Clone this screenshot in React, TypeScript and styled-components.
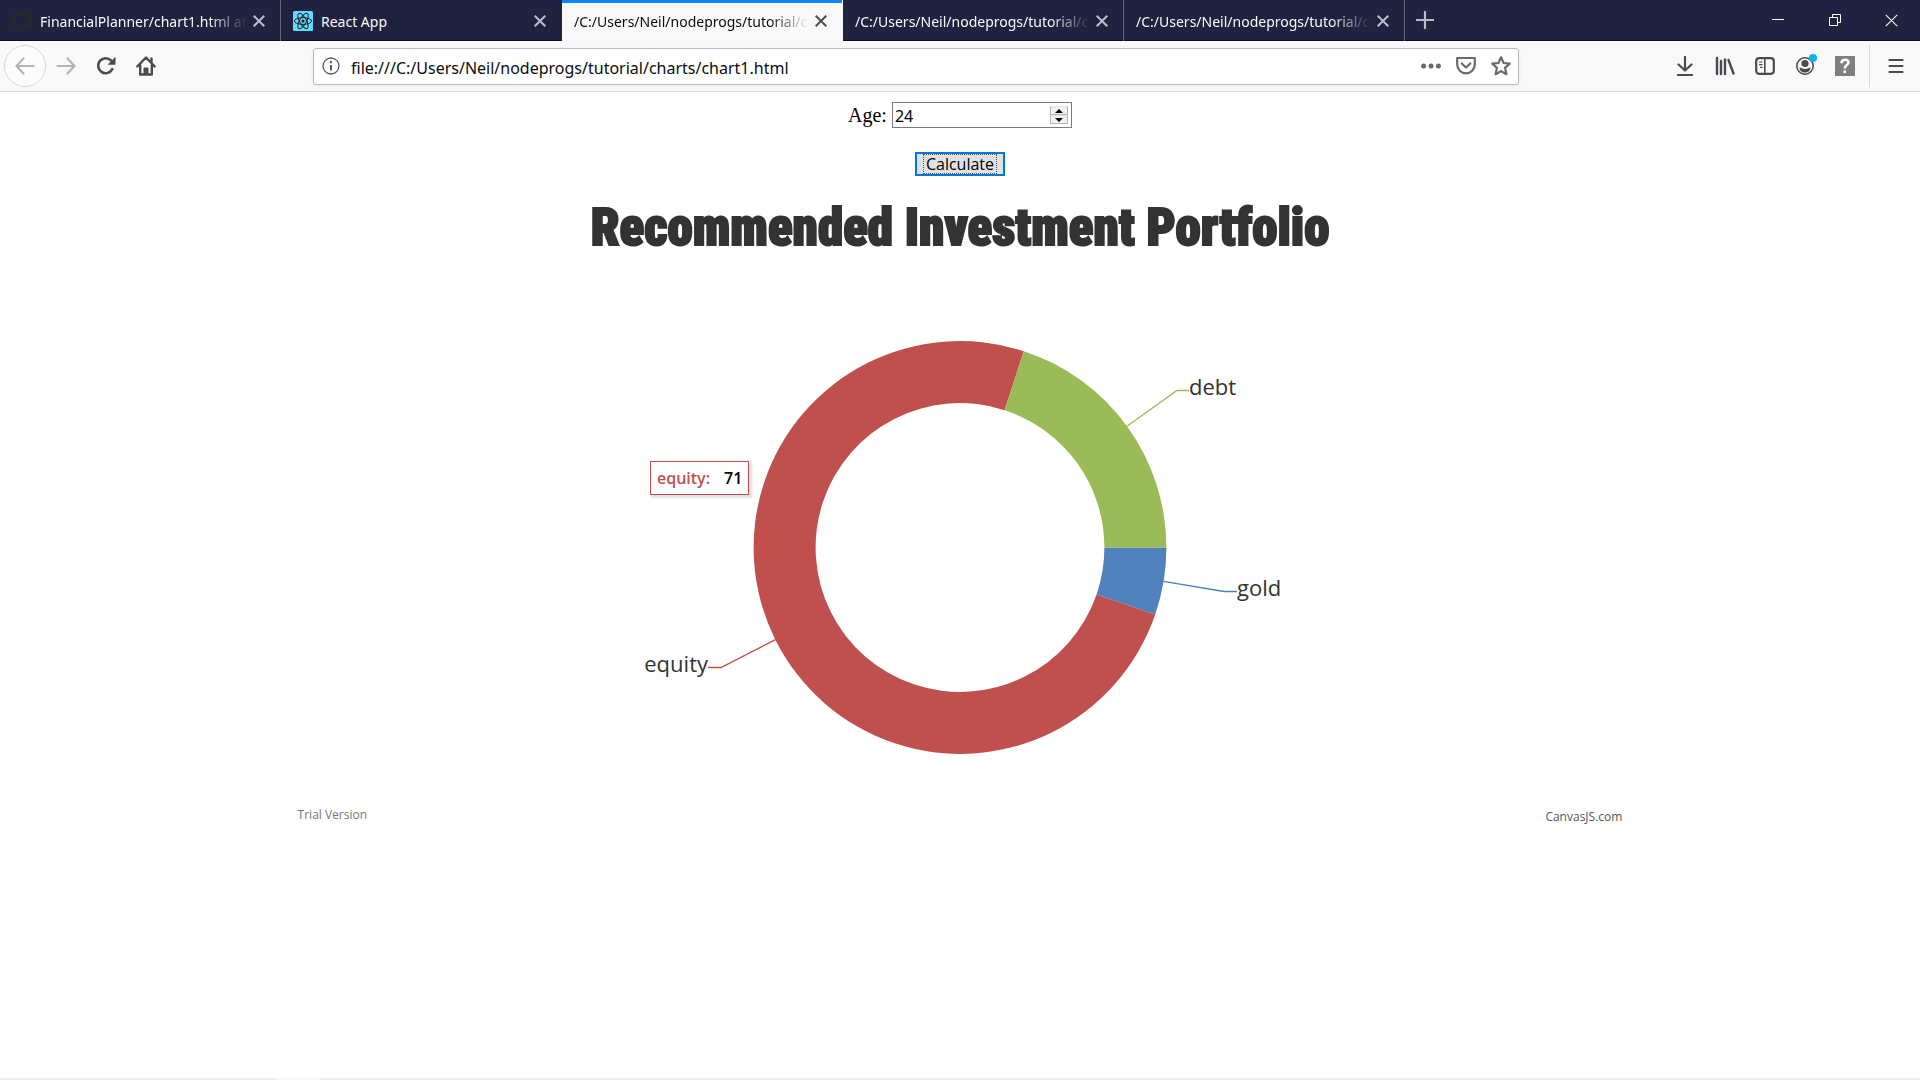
import React from 'react';
import styled, { createGlobalStyle, css } from 'styled-components';

const ui = '"Noto Sans", "Open Sans", sans-serif';
const chartFont = '"Open Sans", "Noto Sans", sans-serif';

const GlobalStyle = createGlobalStyle`
  *, *::before, *::after { box-sizing: border-box; }
  body { margin: 0; background: #fff; }
  button, input { font: inherit; color: inherit; margin: 0; padding: 0; border: 0; background: none; outline: none; }
  svg { display: block; flex: none; }
`;

const Window = styled.div`
  min-height: 100vh;
  display: flex;
  flex-direction: column;
  border: 0 solid #ececec;
  border-bottom-width: 2px;
  border-image: linear-gradient(to right, #ececec 276px, #f8f8f8 276px 321px, #ececec 321px) 2;
  font-family: ${ui};
`;

const TabStrip = styled.header`
  display: flex;
  height: 41px;
  background: #202340;
  border-bottom: 1px solid #0d0e24;
  color: #f9f9fa;
`;

const Tab = styled.div<{ $active?: boolean; $divider?: boolean }>`
  display: flex;
  align-items: center;
  flex: 0 1 281px;
  min-width: 0;
  height: 41px;
  padding: 0 13px 0 12px;
  gap: 8px;
  border-right: 1px solid ${p => (p.$divider ? '#63657a' : 'transparent')};
  ${p =>
    p.$active &&
    css`
      background: #f9f9fa;
      color: #0c0c0d;
      box-shadow: inset 0 3px #0a84ff;
    `}
`;

const TabTitle = styled.button<{ $fade: boolean }>`
  flex: 1;
  min-width: 0;
  padding-top: 2px;
  overflow: hidden;
  white-space: nowrap;
  text-align: left;
  font-size: 14px;
  line-height: 22px;
  ${p => p.$fade && css`mask-image: linear-gradient(to left, transparent, #000 40px);`}
`;

const IconButton = styled.button<{ $size?: number; $color?: string }>`
  display: grid;
  place-items: center;
  flex: none;
  width: ${p => p.$size ?? 40}px;
  height: ${p => p.$size ?? 40}px;
  color: ${p => p.$color ?? '#4a4a4f'};
`;

const CloseButton = styled(IconButton)`
  width: 16px;
  height: 16px;
  margin-left: -4px;
  color: inherit;
  opacity: 0.72;
`;

const NewTab = styled(IconButton)`
  color: #b9bac6;
`;

const WindowControls = styled.div`
  display: flex;
  margin-left: auto;
`;

const WindowButton = styled.button`
  display: grid;
  place-items: center;
  width: 57px;
  height: 40px;
`;

const Toolbar = styled.nav`
  display: flex;
  align-items: center;
  height: 51px;
  padding: 0 4px;
  background: #f9f9fa;
  border-bottom: 1px solid #e0e0e1;
`;

const BackButton = styled(IconButton)`
  width: 42px;
  height: 42px;
  border: 1px solid #d8d8d9;
  border-radius: 50%;
  background: #fcfcfc;
`;

const AddressBar = styled.label`
  display: flex;
  align-items: center;
  flex: 1;
  height: 37px;
  margin: 0 146px 0 147px;
  padding: 0 0 0 8px;
  border: 1px solid #b9b9ba;
  border-radius: 3px;
  background: #fff;
  box-shadow: 0 1px 4px rgba(0, 0, 0, 0.06);
`;

const Address = styled.input`
  flex: 1;
  min-width: 0;
  margin-left: 11px;
  padding-top: 4px;
  font-size: 16px;
  line-height: 24px;
  color: #0c0c0d;
`;

const MenuDivider = styled.span`
  width: 1px;
  height: 42px;
  margin: 0 6px 0 4px;
  background: #d9d9da;
`;

const Page = styled.main`
  display: flex;
  flex-direction: column;
  align-items: center;
  padding: 10px 8px;
`;

const Form = styled.form`
  display: flex;
  flex-direction: column;
  align-items: center;
  gap: 24px;
`;

const AgeLabel = styled.label`
  display: flex;
  align-items: center;
  gap: 5px;
  font: 20px/26px "Liberation Serif", serif;
  color: #000;
`;

const NumberField = styled.span`
  display: flex;
  align-items: center;
  width: 180px;
  height: 26px;
  padding: 0 3px 0 2px;
  border: 1px solid #7a7a7a;
  font: 16px/22px ${ui};
`;

const NumberInput = styled.input`
  flex: 1;
  min-width: 0;
  padding-top: 2px;
  appearance: textfield;
  &::-webkit-inner-spin-button { appearance: none; margin: 0; }
`;

const Spinner = styled.span`
  display: grid;
  grid-template-rows: 9px 9px;
  width: 18px;
  background: #f0f0f0;
`;

const SpinButton = styled.button`
  display: grid;
  place-items: center;
  border: 1px solid #b4b4b4;
  border-top-color: #e4e4e4;
`;

const Calculate = styled.button`
  width: 90px;
  height: 24px;
  padding: 0 6px;
  border: 2px solid #0078d7;
  background: #e1e1e1;
  font: 16px/20px ${chartFont};
  color: #000;
`;

const FocusRing = styled.span`
  display: block;
  outline: 1px dotted #555;
  outline-offset: -1px;
`;

const Chart = styled.section`
  width: 70%;
  display: flex;
  flex-direction: column;
  align-items: center;
  margin-top: 20px;
`;

const Title = styled.h1`
  margin: 0;
  font: 900 51px/64px Impact, "Roboto Condensed", Roboto, sans-serif;
  color: #333;
  -webkit-text-stroke: 2px #333;
  white-space: nowrap;
`;

const Plot = styled.div`
  position: relative;
  width: 680px;
  margin-top: 60px;
`;

const Tooltip = styled.div`
  position: absolute;
  left: 30px;
  top: 141px;
  display: flex;
  gap: 14px;
  padding: 4px 6px;
  border: 1px solid #c0504e;
  background: #fff;
  box-shadow: 2px 2px 2px 1px rgba(0, 0, 0, 0.12);
  font: 600 16px/24px ${chartFont};
  color: #000;
`;

const TooltipName = styled.span`
  color: #c0504e;
`;

const Credits = styled.footer`
  display: flex;
  justify-content: space-between;
  align-self: stretch;
  margin-top: 25px;
  padding: 0 4px;
  font: 12px/20px ${chartFont};
  color: #777;
`;

const CreditLink = styled.a`
  padding-top: 2px;
  color: #555;
  text-decoration: none;
`;

const Cross = ({ size = 12, width = 2 }: { size?: number; width?: number }) => (
  <svg width={size} height={size} viewBox="0 0 12 12" fill="none" stroke="currentColor" strokeWidth={width}>
    <path d="M.7.7l10.6 10.6M11.3.7.7 11.3" />
  </svg>
);

const Line = ({ size = 20, children }: { size?: number; children: React.ReactNode }) => (
  <svg width={size} height={size} viewBox="0 0 20 20" fill="none" stroke="currentColor" strokeWidth="2.2" strokeLinecap="round" strokeLinejoin="round">
    {children}
  </svg>
);

const GithubMark = () => (
  <svg width="20" height="20" viewBox="0 0 16 16" fill="#24292e">
    <path d="M8 0C3.58 0 0 3.58 0 8c0 3.54 2.29 6.53 5.47 7.59.4.07.55-.17.55-.38 0-.19-.01-.82-.01-1.49-2.01.37-2.53-.49-2.69-.94-.09-.23-.48-.94-.82-1.13-.28-.15-.68-.52-.01-.53.63-.01 1.08.58 1.23.82.72 1.21 1.87.87 2.33.66.07-.52.28-.87.51-1.07-1.78-.2-3.64-.89-3.64-3.95 0-.87.31-1.59.82-2.15-.08-.2-.36-1.02.08-2.12 0 0 .67-.21 2.2.82a7.6 7.6 0 0 1 4 0c1.53-1.04 2.2-.82 2.2-.82.44 1.1.16 1.92.08 2.12.51.56.82 1.27.82 2.15 0 3.07-1.87 3.75-3.65 3.95.29.25.54.73.54 1.48 0 1.07-.01 1.93-.01 2.2 0 .21.15.46.55.38A8.01 8.01 0 0 0 16 8c0-4.42-3.58-8-8-8z" />
  </svg>
);

const ReactMark = () => (
  <svg width="20" height="20" viewBox="0 0 20 20" fill="none" stroke="#20232a" strokeWidth="1">
    <rect width="20" height="20" rx="1.5" fill="#61dafb" stroke="none" />
    <circle cx="10" cy="10" r="1.6" fill="#20232a" stroke="none" />
    {[0, 60, 120].map(a => (
      <ellipse key={a} cx="10" cy="10" rx="8.6" ry="3.4" transform={`rotate(${a} 10 10)`} />
    ))}
  </svg>
);

type TabInfo = { title: string; icon?: React.ReactNode; active?: boolean; divider?: boolean };

const tabs: TabInfo[] = [
  { title: 'FinancialPlanner/chart1.html at', icon: <GithubMark />, divider: true },
  { title: 'React App', icon: <ReactMark /> },
  { title: '/C:/Users/Neil/nodeprogs/tutorial/c', active: true },
  { title: '/C:/Users/Neil/nodeprogs/tutorial/c', divider: true },
  { title: '/C:/Users/Neil/nodeprogs/tutorial/c', divider: true },
];

const CX = 340;
const CY = 227.5;
const OUTER = 206.4;
const INNER = 144.4;

const slices = [
  { name: 'gold', value: 5, color: '#4f81bc', elbow: [604, 271.5], end: 617, anchor: 'start' as const },
  { name: 'equity', value: 71, color: '#c0504e', elbow: [101, 347.5], end: 88, anchor: 'end' as const },
  { name: 'debt', value: 19, color: '#9bbb58', elbow: [557, 70.5], end: 569, anchor: 'start' as const },
];

const at = (r: number, a: number) => `${CX + r * Math.cos(a)} ${CY + r * Math.sin(a)}`;

function Doughnut() {
  const total = slices.reduce((sum, s) => sum + s.value, 0);
  let angle = 0;
  return (
    <svg width="680" height="460" viewBox="0 0 680 460" role="img" aria-label="Recommended Investment Portfolio">
      {slices.map(s => {
        const start = angle;
        const end = (angle += (s.value / total) * 2 * Math.PI);
        const large = end - start > Math.PI ? 1 : 0;
        const [ex, ey] = s.elbow;
        return (
          <g key={s.name}>
            <path
              fill={s.color}
              d={`M${at(OUTER, start)}A${OUTER} ${OUTER} 0 ${large} 1 ${at(OUTER, end)}L${at(INNER, end)}A${INNER} ${INNER} 0 ${large} 0 ${at(INNER, start)}Z`}
            />
            <path fill="none" stroke={s.color} strokeWidth="1.3" d={`M${at(OUTER, (start + end) / 2)}L${ex} ${ey}H${s.end}`} />
            <text x={s.end} y={ey + 4} textAnchor={s.anchor} fontFamily={chartFont} fontSize="22" fill="#333">
              {s.name}
            </text>
          </g>
        );
      })}
    </svg>
  );
}

export default function App() {
  return (
    <Window>
      <GlobalStyle />
      <TabStrip>
        {tabs.map((t, i) => (
          <Tab key={i} $active={t.active} $divider={t.divider}>
            {t.icon}
            <TabTitle type="button" $fade={t.title.length > 20}>{t.title}</TabTitle>
            <CloseButton type="button" aria-label="Close tab"><Cross /></CloseButton>
          </Tab>
        ))}
        <NewTab type="button" aria-label="New tab">
          <svg width="18" height="18" viewBox="0 0 18 18" stroke="currentColor" strokeWidth="2.2"><path d="M9 0v18M0 9h18" /></svg>
        </NewTab>
        <WindowControls>
          <WindowButton type="button" aria-label="Minimize">
            <svg width="12" height="12" viewBox="0 0 12 12"><path d="M0 5.5h12" stroke="#fff" /></svg>
          </WindowButton>
          <WindowButton type="button" aria-label="Restore">
            <svg width="12" height="12" viewBox="0 0 12 12" fill="none" stroke="#fff"><path d="M.5 3.5h8v8h-8zM3.5 3.5v-3h8v8h-3" /></svg>
          </WindowButton>
          <WindowButton type="button" aria-label="Close"><Cross size={13} width={1} /></WindowButton>
        </WindowControls>
      </TabStrip>

      <Toolbar>
        <BackButton type="button" aria-label="Back" $color="#b4b4b6"><Line><path d="M18.5 10H1.5M8.5 2.5 1.5 10l7 7.5" /></Line></BackButton>
        <IconButton type="button" aria-label="Forward" $color="#b4b4b6"><Line><path d="M1.5 10h17M11.5 2.5l7 7.5-7 7.5" /></Line></IconButton>
        <IconButton type="button" aria-label="Reload">
          <svg width="20" height="20" viewBox="0 0 20 20" fill="none" stroke="currentColor" strokeWidth="2.6">
            <path d="M16.3 13.2A7.5 7.5 0 1 1 15 4.4" strokeLinecap="round" />
            <path d="M19.5.8v8h-8z" fill="currentColor" stroke="none" />
          </svg>
        </IconButton>
        <IconButton type="button" aria-label="Home">
          <svg width="20" height="20" viewBox="0 0 20 20" fill="none" stroke="currentColor" strokeWidth="2.4" strokeLinecap="round" strokeLinejoin="round">
            <path d="M1.3 10.5 10 1.5l8.7 9M4.2 9.5v9h11.6v-9M15.5 2.5v4" />
            <path d="M8 18v-6h4v6z" fill="currentColor" strokeWidth="1" />
          </svg>
        </IconButton>
        <AddressBar>
          <svg width="18" height="18" viewBox="0 0 18 18" fill="none" stroke="#5c5c5f" strokeWidth="1.3">
            <circle cx="9" cy="9" r="8" />
            <path d="M9 8v5.5" strokeWidth="2" /><circle cx="9" cy="5" r="1.2" fill="#5c5c5f" stroke="none" />
          </svg>
          <Address aria-label="Address" defaultValue="file:///C:/Users/Neil/nodeprogs/tutorial/charts/chart1.html" />
          <IconButton type="button" aria-label="Page actions" $size={35} $color="#69696d">
            <svg width="20" height="6" viewBox="0 0 20 6" fill="currentColor"><circle cx="2.6" cy="3" r="2.5" /><circle cx="10" cy="3" r="2.5" /><circle cx="17.4" cy="3" r="2.5" /></svg>
          </IconButton>
          <IconButton type="button" aria-label="Save to Pocket" $size={35} $color="#69696d">
            <Line><path d="M1.2 2h17.6v6.5a8.8 8.8 0 0 1-17.6 0zM5.8 7.5l4.2 4 4.2-4" /></Line>
          </IconButton>
          <IconButton type="button" aria-label="Bookmark" $size={35} $color="#69696d">
            <Line><path d="M10 1.3l2.6 5.7 6.1.7-4.6 4.2 1.3 6.3L10 15.1l-5.4 3.1 1.3-6.3L1.3 7.7 7.4 7z" /></Line>
          </IconButton>
        </AddressBar>
        <IconButton type="button" aria-label="Downloads"><Line><path d="M10 1v13M3.5 8.5 10 14.5l6.5-6M3 19h14" /></Line></IconButton>
        <IconButton type="button" aria-label="Library">
          <svg width="20" height="20" viewBox="0 0 20 20" fill="none" stroke="currentColor" strokeWidth="2.4" strokeLinecap="round"><path d="M2 2v16M6 5v13M10 3.5V18M13.5 4l5 13.5" /></svg>
        </IconButton>
        <IconButton type="button" aria-label="Sidebars">
          <svg width="20" height="20" viewBox="0 0 20 20" fill="none" stroke="currentColor" strokeWidth="2.2"><rect x="1.2" y="2.2" width="17.6" height="15.6" rx="3" /><path d="M9.8 2v16" strokeWidth="1.6" /><path d="M4 6h3.5M4 8.7h3.5M5 11.4h2.5" strokeWidth="1.2" /></svg>
        </IconButton>
        <IconButton type="button" aria-label="Account">
          <svg width="24" height="26" viewBox="0 0 24 26" fill="none">
            <circle cx="12" cy="13" r="8.2" stroke="currentColor" strokeWidth="1.5" />
            <circle cx="12" cy="10.5" r="3.6" fill="currentColor" />
            <path d="M6.5 14.5c1.5 0 3 1.5 5.5 1.5s4-1.5 5.5-1.5c0 3-2.5 5-5.5 5s-5.5-2-5.5-5z" fill="currentColor" />
            <circle cx="20" cy="5" r="4" fill="#00b3f4" />
          </svg>
        </IconButton>
        <IconButton type="button" aria-label="Help">
          <svg width="20" height="20" viewBox="0 0 20 20" fill="none" stroke="#fff" strokeWidth="2.6"><path fill="#808080" stroke="none" d="M0 0h20v20H0z" /><path d="M6.5 7.2c0-4.5 7-4.5 7-.7 0 2.7-3.8 2.3-3.8 6M9.7 14.5v2.5" /></svg>
        </IconButton>
        <MenuDivider />
        <IconButton type="button" aria-label="Menu">
          <svg width="16" height="16" viewBox="0 0 16 16" stroke="currentColor" strokeWidth="2.2" strokeLinecap="round"><path d="M1.5 2h13M1.5 8h13M1.5 14h13" /></svg>
        </IconButton>
      </Toolbar>

      <Page>
        <Form onSubmit={e => e.preventDefault()}>
          <AgeLabel>
            Age:
            <NumberField>
              <NumberInput type="number" defaultValue="24" aria-label="Age" />
              <Spinner>
                <SpinButton type="button" aria-label="Increase"><svg width="8" height="4" viewBox="0 0 8 4"><path d="M0 4l4-4 4 4z" /></svg></SpinButton>
                <SpinButton type="button" aria-label="Decrease"><svg width="8" height="4" viewBox="0 0 8 4"><path d="M0 0l4 4 4-4z" /></svg></SpinButton>
              </Spinner>
            </NumberField>
          </AgeLabel>
          <Calculate type="submit"><FocusRing>Calculate</FocusRing></Calculate>
        </Form>
        <Chart>
          <Title>Recommended Investment Portfolio</Title>
          <Plot>
            <Doughnut />
            <Tooltip><TooltipName>equity:</TooltipName><span>71</span></Tooltip>
          </Plot>
          <Credits>
            <span>Trial Version</span>
            <CreditLink href="https://canvasjs.com/">CanvasJS.com</CreditLink>
          </Credits>
        </Chart>
      </Page>
    </Window>
  );
}
